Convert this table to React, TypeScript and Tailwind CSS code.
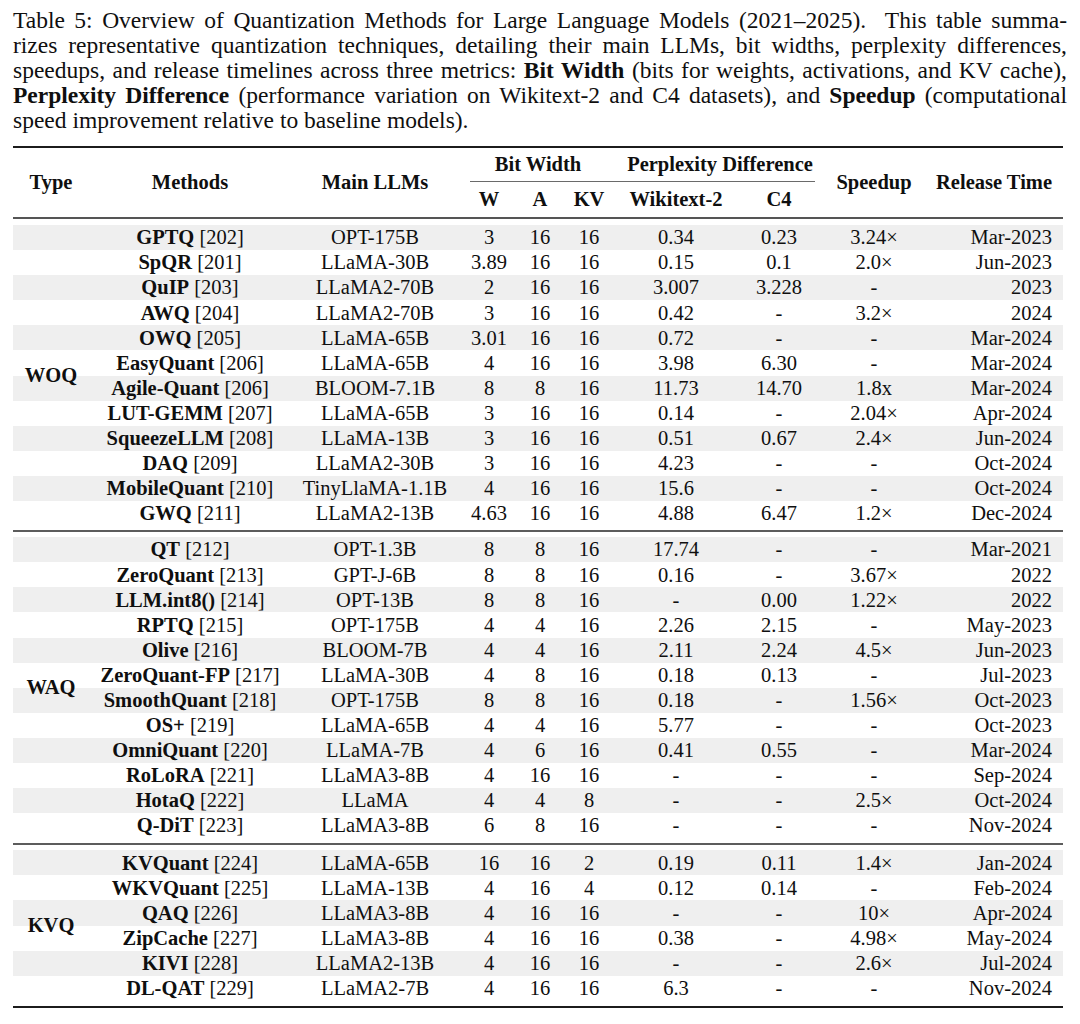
import React from "react";

type Row = [string, string, string, string, string, string, string, string, string, string];

const woq: Row[] = [
  ["GPTQ", "202", "OPT-175B", "3", "16", "16", "0.34", "0.23", "3.24×", "Mar-2023"],
  ["SpQR", "201", "LLaMA-30B", "3.89", "16", "16", "0.15", "0.1", "2.0×", "Jun-2023"],
  ["QuIP", "203", "LLaMA2-70B", "2", "16", "16", "3.007", "3.228", "-", "2023"],
  ["AWQ", "204", "LLaMA2-70B", "3", "16", "16", "0.42", "-", "3.2×", "2024"],
  ["OWQ", "205", "LLaMA-65B", "3.01", "16", "16", "0.72", "-", "-", "Mar-2024"],
  ["EasyQuant", "206", "LLaMA-65B", "4", "16", "16", "3.98", "6.30", "-", "Mar-2024"],
  ["Agile-Quant", "206", "BLOOM-7.1B", "8", "8", "16", "11.73", "14.70", "1.8x", "Mar-2024"],
  ["LUT-GEMM", "207", "LLaMA-65B", "3", "16", "16", "0.14", "-", "2.04×", "Apr-2024"],
  ["SqueezeLLM", "208", "LLaMA-13B", "3", "16", "16", "0.51", "0.67", "2.4×", "Jun-2024"],
  ["DAQ", "209", "LLaMA2-30B", "3", "16", "16", "4.23", "-", "-", "Oct-2024"],
  ["MobileQuant", "210", "TinyLlaMA-1.1B", "4", "16", "16", "15.6", "-", "-", "Oct-2024"],
  ["GWQ", "211", "LLaMA2-13B", "4.63", "16", "16", "4.88", "6.47", "1.2×", "Dec-2024"],
];

const waq: Row[] = [
  ["QT", "212", "OPT-1.3B", "8", "8", "16", "17.74", "-", "-", "Mar-2021"],
  ["ZeroQuant", "213", "GPT-J-6B", "8", "8", "16", "0.16", "-", "3.67×", "2022"],
  ["LLM.int8()", "214", "OPT-13B", "8", "8", "16", "-", "0.00", "1.22×", "2022"],
  ["RPTQ", "215", "OPT-175B", "4", "4", "16", "2.26", "2.15", "-", "May-2023"],
  ["Olive", "216", "BLOOM-7B", "4", "4", "16", "2.11", "2.24", "4.5×", "Jun-2023"],
  ["ZeroQuant-FP", "217", "LLaMA-30B", "4", "8", "16", "0.18", "0.13", "-", "Jul-2023"],
  ["SmoothQuant", "218", "OPT-175B", "8", "8", "16", "0.18", "-", "1.56×", "Oct-2023"],
  ["OS+", "219", "LLaMA-65B", "4", "4", "16", "5.77", "-", "-", "Oct-2023"],
  ["OmniQuant", "220", "LLaMA-7B", "4", "6", "16", "0.41", "0.55", "-", "Mar-2024"],
  ["RoLoRA", "221", "LLaMA3-8B", "4", "16", "16", "-", "-", "-", "Sep-2024"],
  ["HotaQ", "222", "LLaMA", "4", "4", "8", "-", "-", "2.5×", "Oct-2024"],
  ["Q-DiT", "223", "LLaMA3-8B", "6", "8", "16", "-", "-", "-", "Nov-2024"],
];

const kvq: Row[] = [
  ["KVQuant", "224", "LLaMA-65B", "16", "16", "2", "0.19", "0.11", "1.4×", "Jan-2024"],
  ["WKVQuant", "225", "LLaMA-13B", "4", "16", "4", "0.12", "0.14", "-", "Feb-2024"],
  ["QAQ", "226", "LLaMA3-8B", "4", "16", "16", "-", "-", "10×", "Apr-2024"],
  ["ZipCache", "227", "LLaMA3-8B", "4", "16", "16", "0.38", "-", "4.98×", "May-2024"],
  ["KIVI", "228", "LLaMA2-13B", "4", "16", "16", "-", "-", "2.6×", "Jul-2024"],
  ["DL-QAT", "229", "LLaMA2-7B", "4", "16", "16", "6.3", "-", "-", "Nov-2024"],
];

const COLS =
  "grid grid-cols-[76px_202px_168px_60px_42px_56px_118px_88px_102px_138px]";

function DataRow({ r, shaded }: { r: Row; shaded: boolean }) {
  return (
    <div
      className={`${COLS} h-[25.1px] items-center text-center ${
        shaded ? "bg-[#efefef]" : "bg-white"
      }`}
    >
      <div />
      <div className="whitespace-nowrap">
        <span className="font-bold">{r[0]}</span> [{r[1]}]
      </div>
      <div className="whitespace-nowrap">{r[2]}</div>
      <div>{r[3]}</div>
      <div>{r[4]}</div>
      <div>{r[5]}</div>
      <div>{r[6]}</div>
      <div>{r[7]}</div>
      <div>{r[8]}</div>
      <div className="text-right pr-[11px] whitespace-nowrap">{r[9]}</div>
    </div>
  );
}

function Group({ label, rows }: { label: string; rows: Row[] }) {
  return (
    <div className="relative">
      {rows.map((r, i) => (
        <DataRow key={r[0] + i} r={r} shaded={i % 2 === 0} />
      ))}
      <div className="absolute inset-y-0 left-0 w-[76px] flex items-center justify-center font-bold">
        {label}
      </div>
    </div>
  );
}

export default function App() {
  return (
    <div
      className="w-[1080px] h-[1024px] bg-white text-[#0f0f0f] px-[13px] pt-[8px]"
      style={{ fontFamily: '"Liberation Serif", "Times New Roman", serif' }}
    >
      <div className="w-[1054px] text-[23.5px] leading-[25px] mb-[13px]">
        <div className="text-justify [text-align-last:justify]">
          Table 5: Overview of Quantization Methods for Large Language Models (2021–2025).&nbsp; This table summa-
        </div>
        <div className="text-justify [text-align-last:justify]">
          rizes representative quantization techniques, detailing their main LLMs, bit widths, perplexity differences,
        </div>
        <div className="text-justify [text-align-last:justify]">
          speedups, and release timelines across three metrics: <b>Bit Width</b> (bits for weights, activations, and KV cache),
        </div>
        <div className="text-justify [text-align-last:justify]">
          <b>Perplexity Difference</b> (performance variation on Wikitext-2 and C4 datasets), and <b>Speedup</b> (computational
        </div>
        <div>speed improvement relative to baseline models).</div>
      </div>

      <div className="w-[1050px] text-[20.5px] leading-none">
        <div className="h-[2px] bg-[#1c1c1c]" />
        <div className={`${COLS} grid-rows-[34px_35px] font-bold text-center`}>
          <div className="row-span-2 flex items-center justify-center">Type</div>
          <div className="row-span-2 flex items-center justify-center">Methods</div>
          <div className="row-span-2 flex items-center justify-center">Main LLMs</div>
          <div className="col-span-3 flex flex-col">
            <div className="flex-1 flex items-center justify-center">Bit Width</div>
            <div className="h-px ml-[11px] bg-[#6a6a6a]" />
          </div>
          <div className="col-span-2 flex flex-col">
            <div className="flex-1 flex items-center justify-center whitespace-nowrap">
              Perplexity Difference
            </div>
            <div className="h-px mr-[8px] bg-[#6a6a6a]" />
          </div>
          <div className="row-span-2 flex items-center justify-center">Speedup</div>
          <div className="row-span-2 flex items-center justify-end pr-[11px] whitespace-nowrap">
            Release Time
          </div>
          <div className="flex items-center justify-center">W</div>
          <div className="flex items-center justify-center">A</div>
          <div className="flex items-center justify-center">KV</div>
          <div className="flex items-center justify-center">Wikitext-2</div>
          <div className="flex items-center justify-center">C4</div>
        </div>
        <div className="h-[2px] bg-[#555555]" />
        <div className="h-[6px]" />
        <Group label="WOQ" rows={woq} />
        <div className="h-[4px]" />
        <div className="h-[2px] bg-[#5c5c5c]" />
        <div className="h-[5px]" />
        <Group label="WAQ" rows={waq} />
        <div className="h-[5px]" />
        <div className="h-[2px] bg-[#5c5c5c]" />
        <div className="h-[5px]" />
        <Group label="KVQ" rows={kvq} />
        <div className="h-[5px]" />
        <div className="h-[2px] bg-[#1c1c1c]" />
      </div>
    </div>
  );
}
